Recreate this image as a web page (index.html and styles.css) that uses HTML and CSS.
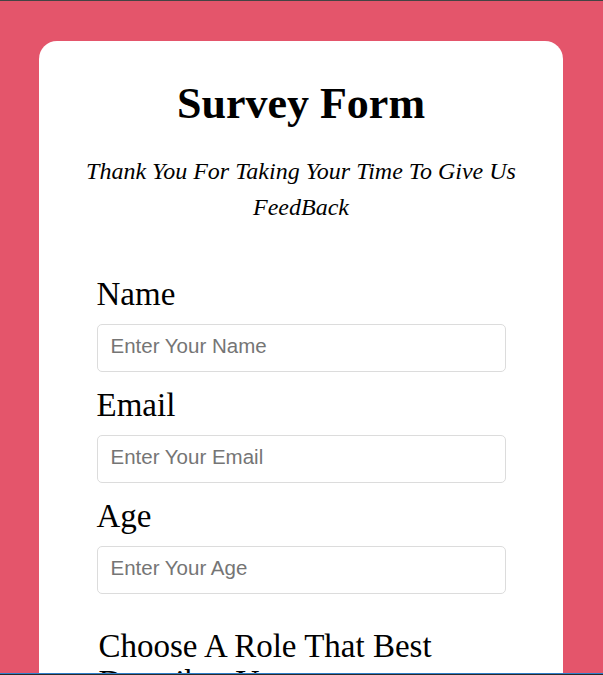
FILE: index.html
```html
<!DOCTYPE html>
<html lang="en">
<head>
<meta charset="UTF-8">
<title>Survey Form</title>
<link rel="stylesheet" href="styles.css">
</head>
<body>
<div class="frame-top"></div>
<div class="frame-bottom"></div>
<main class="card">
  <h1 class="title">Survey Form</h1>
  <p class="subtitle">Thank You For Taking Your Time To Give Us FeedBack</p>
  <form class="form">
    <label class="label" for="name">Name</label>
    <input class="field" id="name" type="text" placeholder="Enter Your Name">
    <label class="label" for="email">Email</label>
    <input class="field" id="email" type="email" placeholder="Enter Your Email">
    <label class="label" for="age">Age</label>
    <input class="field" id="age" type="number" placeholder="Enter Your Age">
    <div class="section">
      <label class="label role-label" for="role">Choose A Role That Best Describes You</label>
      <select class="field" id="role">
        <option>Student</option>
        <option>Full Time Job</option>
        <option>Prefer Not To Say</option>
      </select>
    </div>
  </form>
</main>
</body>
</html>
```
FILE: styles.css
```css
html {
  scrollbar-width: none;
}
body {
  margin: 0;
  background: #e4556b;
  font-family: "Liberation Serif", "Times New Roman", serif;
  color: #000;
}
.frame-top {
  position: fixed;
  top: 0;
  left: 0;
  right: 0;
  height: 1px;
  background: #444;
  z-index: 10;
}
.frame-bottom {
  position: fixed;
  bottom: 0;
  left: 0;
  right: 0;
  height: 1px;
  background: #2a2a2a;
  border-top: 1px solid #2f7fcb;
  z-index: 10;
}
.card {
  width: 524px;
  margin: 41px 40px 0 39px;
  background: #fff;
  border-radius: 18px;
  padding: 37px 0 60px;
  box-sizing: border-box;
}
.title {
  margin: 0;
  text-align: center;
  font-size: 44px;
  font-weight: bold;
}
.subtitle {
  margin: 24px 40px 0;
  text-align: center;
  font-style: italic;
  font-size: 24px;
  line-height: 36px;
}
.form {
  width: 409px;
  margin: 48px auto 0;
  display: flex;
  flex-direction: column;
}
.label {
  display: block;
  font-size: 33px;
  line-height: 34px;
  padding-top: 4px;
  margin: 0 0 13px;
}
.field {
  display: block;
  width: 100%;
  height: 48px;
  box-sizing: border-box;
  margin: 0 0 12px;
  padding: 0 13px 4px;
  border: 1px solid #dcdcdc;
  border-radius: 5px;
  font-family: "Liberation Sans", Arial, sans-serif;
  font-size: 20.5px;
  color: #333;
  background: #fff;
  outline: none;
}
.field::placeholder {
  color: #757575;
}
.section {
  margin-top: 19px;
}
.role-label {
  padding-left: 2px;
  padding-top: 3px;
  line-height: 36px;
}
```
